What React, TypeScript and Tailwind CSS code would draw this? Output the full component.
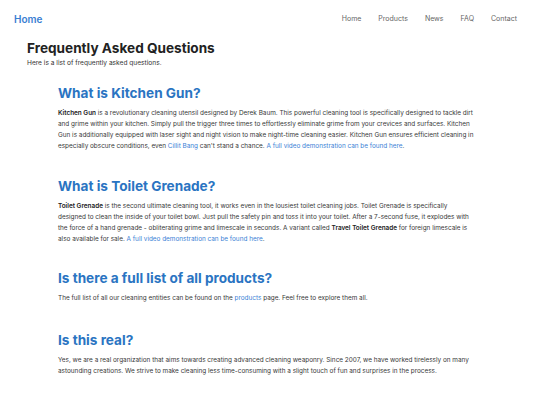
import React from 'react';

const navLinks = ['Home', 'Products', 'News', 'FAQ', 'Contact'];

const A: React.FC<{ children: React.ReactNode }> = ({ children }) => (
  <a href="#" className="text-[#3b82d6]">
    {children}
  </a>
);

const Section: React.FC<{ title: string; children: React.ReactNode; className?: string }> = ({
  title,
  children,
  className,
}) => (
  <section className={className}>
    <h2 className="text-[13.6px] font-bold leading-[20px] text-[#2a74c2]">{title}</h2>
    <p className="mt-[5px] text-[6.4px] leading-[11px] text-[#383838]">{children}</p>
  </section>
);

export default function App() {
  return (
    <div className="min-h-screen bg-white font-['Inter',sans-serif] text-[#222]">
      <nav className="flex items-center justify-between px-[14px] pt-[11px]">
        <a href="#" className="text-[10px] font-semibold leading-[16px] text-[#3a80d2]">
          Home
        </a>
        <ul className="flex gap-[17px] pr-[9px] text-[7px] text-[#666]">
          {navLinks.map((l) => (
            <li key={l}>{l}</li>
          ))}
        </ul>
      </nav>

      <main className="px-[27px] pt-[11px]">
        <h1 className="text-[13.6px] font-bold leading-[20px] text-[#222]">Frequently Asked Questions</h1>
        <p className="text-[6.6px] leading-[10px] text-[#333]">Here is a list of frequently asked questions.</p>

        <div className="pl-[31px] pr-[37px] pt-[15px]">
          <Section title="What is Kitchen Gun?">
            <b className="font-semibold text-[#222]">Kitchen Gun</b> is a revolutionary cleaning utensil designed by
            Derek Baum. This powerful cleaning tool is specifically designed to tackle dirt and grime within your
            kitchen. Simply pull the trigger three times to effortlessly eliminate grime from your crevices and
            surfaces. Kitchen Gun is additionally equipped with laser sight and night vision to make night-time
            cleaning easier. Kitchen Gun ensures efficient cleaning in especially obscure conditions, even{' '}
            <A>Cillit Bang</A> can't stand a chance. <A>A full video demonstration can be found here</A>.
          </Section>

          <Section title="What is Toilet Grenade?" className="mt-[24px]">
            <b className="font-semibold text-[#222]">Toilet Grenade</b> is the second ultimate cleaning tool, it
            works even in the lousiest toilet cleaning jobs. Toilet Grenade is specifically designed to clean the
            inside of your toilet bowl. Just pull the safety pin and toss it into your toilet. After a 7-second
            fuse, it explodes with the force of a hand grenade - obliterating grime and limescale in seconds. A
            variant called <b className="font-semibold text-[#222]">Travel Toilet Grenade</b> for foreign limescale
            is also available for sale. <A>A full video demonstration can be found here</A>.
          </Section>

          <Section title="Is there a full list of all products?" className="mt-[23px]">
            The full list of all our cleaning entities can be found on the <A>products</A> page. Feel free to
            explore them all.
          </Section>

          <Section title="Is this real?" className="mt-[26px]">
            Yes, we are a real organization that aims towards creating advanced cleaning weaponry. Since 2007, we
            have worked tirelessly on many astounding creations. We strive to make cleaning less time-consuming
            with a slight touch of fun and surprises in the process.
          </Section>
        </div>
      </main>
    </div>
  );
}
